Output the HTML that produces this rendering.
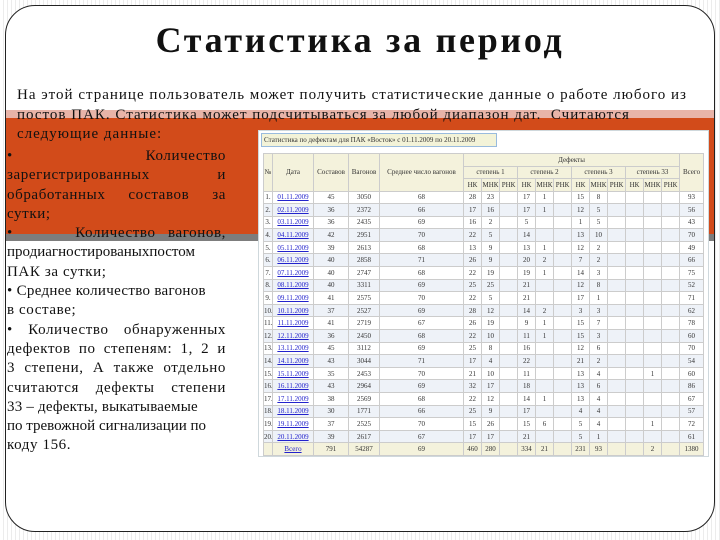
<!DOCTYPE html>
<html><head><meta charset="utf-8"><style>
*{margin:0;padding:0;box-sizing:border-box}
body{width:720px;height:540px;position:relative;overflow:hidden;background:repeating-linear-gradient(90deg,#fff 0,#fff 3px,#ececec 3px,#ececec 4px);font-family:"Liberation Serif",serif}
.frame{position:absolute;left:5px;top:5px;width:710px;height:527px;border:1px solid #222;border-radius:30px;background:#fff;overflow:hidden}
.pink{position:absolute;left:0;top:104px;width:100%;height:8px;background:#e8b4a8}
.orange{position:absolute;left:0;top:112px;width:100%;height:116px;background:#d24b1a}
.gray{position:absolute;left:0;top:228px;width:100%;height:7px;background:#7d7d7d}
h1{position:absolute;left:0;top:13px;width:100%;text-align:center;font-size:36px;font-weight:bold;color:#111;letter-spacing:2.7px}
.p{position:absolute;left:11px;top:80px;width:700px;font-size:15px;line-height:19.5px;color:#111;letter-spacing:1px;white-space:nowrap}
.col{position:absolute;left:1px;top:141px;width:219px;font-size:15px;line-height:19.3px;color:#111;text-align:justify;letter-spacing:0.6px}
.col div{text-align-last:justify;white-space:nowrap}
.col div.l{text-align-last:left}
.tb{position:absolute;left:252px;top:124px;width:451px;height:327px;background:#fff;border:1px solid #cfd8dc}
.cap{position:absolute;left:2px;top:2px;height:14px;width:236px;background:#f3f3d8;border:1px solid #9bd;font-size:7px;line-height:12px;color:#333;white-space:nowrap;overflow:hidden;padding-left:2px}
table{position:absolute;left:4px;top:22px;width:440px;border-collapse:collapse;font-size:7px;color:#333;table-layout:fixed}
td{border:1px solid #ccc;text-align:center;height:12.6px;padding:0;white-space:nowrap;overflow:hidden}
thead td{background:#f4f2dc;height:12.5px}
tbody tr:nth-child(even) td{background:#eef2f8}
tr.t td{background:#f4f2dc!important}
a{color:#22c;text-decoration:underline}
</style></head><body>
<div class="frame">
<div class="pink"></div><div class="orange"></div><div class="gray"></div>
<h1>Статистика за период</h1>
<div class="p">На этой странице пользователь может получить статистические данные о работе любого из<br>постов ПАК. Статистика может подсчитываться за любой диапазон дат.&nbsp; Считаются<br>следующие данные:</div>
<div class="col">
<div>• Количество</div>
<div>зарегистрированных и</div>
<div>обработанных составов за</div>
<div class="l">сутки;</div>
<div>• &nbsp;&nbsp;&nbsp;&nbsp;Количество вагонов,</div>
<div class="l" style="letter-spacing:0">продиагностированыхпостом</div>
<div class="l">ПАК за сутки;</div>
<div class="l" style="letter-spacing:0.3px">• Среднее количество вагонов</div>
<div class="l">в составе;</div>
<div>• Количество обнаруженных</div>
<div>дефектов по степеням: 1, 2 и</div>
<div>3 степени, А также отдельно</div>
<div>считаются дефекты степени</div>
<div class="l" style="letter-spacing:0.2px">33 – дефекты, выкатываемые</div>
<div class="l" style="letter-spacing:0">по тревожной сигнализации по</div>
<div class="l">коду 156.</div>
</div>
<div class="tb">
<div class="cap">Статистика по дефектам для ПАК «Восток» с 01.11.2009 по 20.11.2009</div>
<table>
<colgroup><col style="width:9px"><col style="width:41px"><col style="width:35px"><col style="width:31px"><col style="width:84px"><col span="12" style="width:18px"><col style="width:24px"></colgroup>
<thead>
<tr><td rowspan="3">№</td><td rowspan="3">Дата</td><td rowspan="3">Составов</td><td rowspan="3">Вагонов</td><td rowspan="3">Среднее число вагонов</td><td colspan="12">Дефекты</td><td rowspan="3">Всего</td></tr>
<tr><td colspan="3">степень 1</td><td colspan="3">степень 2</td><td colspan="3">степень 3</td><td colspan="3">степень 33</td></tr>
<tr><td>НК</td><td>МНК</td><td>РНК</td><td>НК</td><td>МНК</td><td>РНК</td><td>НК</td><td>МНК</td><td>РНК</td><td>НК</td><td>МНК</td><td>РНК</td></tr>
</thead>
<tbody>
<tr><td>1.</td><td><a>01.11.2009</a></td><td>45</td><td>3050</td><td>68</td><td>28</td><td>23</td><td></td><td>17</td><td>1</td><td></td><td>15</td><td>8</td><td></td><td></td><td></td><td></td><td>93</td></tr>
<tr><td>2.</td><td><a>02.11.2009</a></td><td>36</td><td>2372</td><td>66</td><td>17</td><td>16</td><td></td><td>17</td><td>1</td><td></td><td>12</td><td>5</td><td></td><td></td><td></td><td></td><td>56</td></tr>
<tr><td>3.</td><td><a>03.11.2009</a></td><td>36</td><td>2435</td><td>69</td><td>16</td><td>2</td><td></td><td>5</td><td></td><td></td><td>1</td><td>5</td><td></td><td></td><td></td><td></td><td>43</td></tr>
<tr><td>4.</td><td><a>04.11.2009</a></td><td>42</td><td>2951</td><td>70</td><td>22</td><td>5</td><td></td><td>14</td><td></td><td></td><td>13</td><td>10</td><td></td><td></td><td></td><td></td><td>70</td></tr>
<tr><td>5.</td><td><a>05.11.2009</a></td><td>39</td><td>2613</td><td>68</td><td>13</td><td>9</td><td></td><td>13</td><td>1</td><td></td><td>12</td><td>2</td><td></td><td></td><td></td><td></td><td>49</td></tr>
<tr><td>6.</td><td><a>06.11.2009</a></td><td>40</td><td>2858</td><td>71</td><td>26</td><td>9</td><td></td><td>20</td><td>2</td><td></td><td>7</td><td>2</td><td></td><td></td><td></td><td></td><td>66</td></tr>
<tr><td>7.</td><td><a>07.11.2009</a></td><td>40</td><td>2747</td><td>68</td><td>22</td><td>19</td><td></td><td>19</td><td>1</td><td></td><td>14</td><td>3</td><td></td><td></td><td></td><td></td><td>75</td></tr>
<tr><td>8.</td><td><a>08.11.2009</a></td><td>40</td><td>3311</td><td>69</td><td>25</td><td>25</td><td></td><td>21</td><td></td><td></td><td>12</td><td>8</td><td></td><td></td><td></td><td></td><td>52</td></tr>
<tr><td>9.</td><td><a>09.11.2009</a></td><td>41</td><td>2575</td><td>70</td><td>22</td><td>5</td><td></td><td>21</td><td></td><td></td><td>17</td><td>1</td><td></td><td></td><td></td><td></td><td>71</td></tr>
<tr><td>10.</td><td><a>10.11.2009</a></td><td>37</td><td>2527</td><td>69</td><td>28</td><td>12</td><td></td><td>14</td><td>2</td><td></td><td>3</td><td>3</td><td></td><td></td><td></td><td></td><td>62</td></tr>
<tr><td>11.</td><td><a>11.11.2009</a></td><td>41</td><td>2719</td><td>67</td><td>26</td><td>19</td><td></td><td>9</td><td>1</td><td></td><td>15</td><td>7</td><td></td><td></td><td></td><td></td><td>78</td></tr>
<tr><td>12.</td><td><a>12.11.2009</a></td><td>36</td><td>2450</td><td>68</td><td>22</td><td>10</td><td></td><td>11</td><td>1</td><td></td><td>15</td><td>3</td><td></td><td></td><td></td><td></td><td>60</td></tr>
<tr><td>13.</td><td><a>13.11.2009</a></td><td>45</td><td>3112</td><td>69</td><td>25</td><td>8</td><td></td><td>16</td><td></td><td></td><td>12</td><td>6</td><td></td><td></td><td></td><td></td><td>70</td></tr>
<tr><td>14.</td><td><a>14.11.2009</a></td><td>43</td><td>3044</td><td>71</td><td>17</td><td>4</td><td></td><td>22</td><td></td><td></td><td>21</td><td>2</td><td></td><td></td><td></td><td></td><td>54</td></tr>
<tr><td>15.</td><td><a>15.11.2009</a></td><td>35</td><td>2453</td><td>70</td><td>21</td><td>10</td><td></td><td>11</td><td></td><td></td><td>13</td><td>4</td><td></td><td></td><td>1</td><td></td><td>60</td></tr>
<tr><td>16.</td><td><a>16.11.2009</a></td><td>43</td><td>2964</td><td>69</td><td>32</td><td>17</td><td></td><td>18</td><td></td><td></td><td>13</td><td>6</td><td></td><td></td><td></td><td></td><td>86</td></tr>
<tr><td>17.</td><td><a>17.11.2009</a></td><td>38</td><td>2569</td><td>68</td><td>22</td><td>12</td><td></td><td>14</td><td>1</td><td></td><td>13</td><td>4</td><td></td><td></td><td></td><td></td><td>67</td></tr>
<tr><td>18.</td><td><a>18.11.2009</a></td><td>30</td><td>1771</td><td>66</td><td>25</td><td>9</td><td></td><td>17</td><td></td><td></td><td>4</td><td>4</td><td></td><td></td><td></td><td></td><td>57</td></tr>
<tr><td>19.</td><td><a>19.11.2009</a></td><td>37</td><td>2525</td><td>70</td><td>15</td><td>26</td><td></td><td>15</td><td>6</td><td></td><td>5</td><td>4</td><td></td><td></td><td>1</td><td></td><td>72</td></tr>
<tr><td>20.</td><td><a>20.11.2009</a></td><td>39</td><td>2617</td><td>67</td><td>17</td><td>17</td><td></td><td>21</td><td></td><td></td><td>5</td><td>1</td><td></td><td></td><td></td><td></td><td>61</td></tr>
<tr class="t"><td></td><td><a>Всего</a></td><td>791</td><td>54287</td><td>69</td><td>460</td><td>280</td><td></td><td>334</td><td>21</td><td></td><td>231</td><td>93</td><td></td><td></td><td>2</td><td></td><td>1380</td></tr>
</tbody>
</table>
</div>
</div>
</body></html>
